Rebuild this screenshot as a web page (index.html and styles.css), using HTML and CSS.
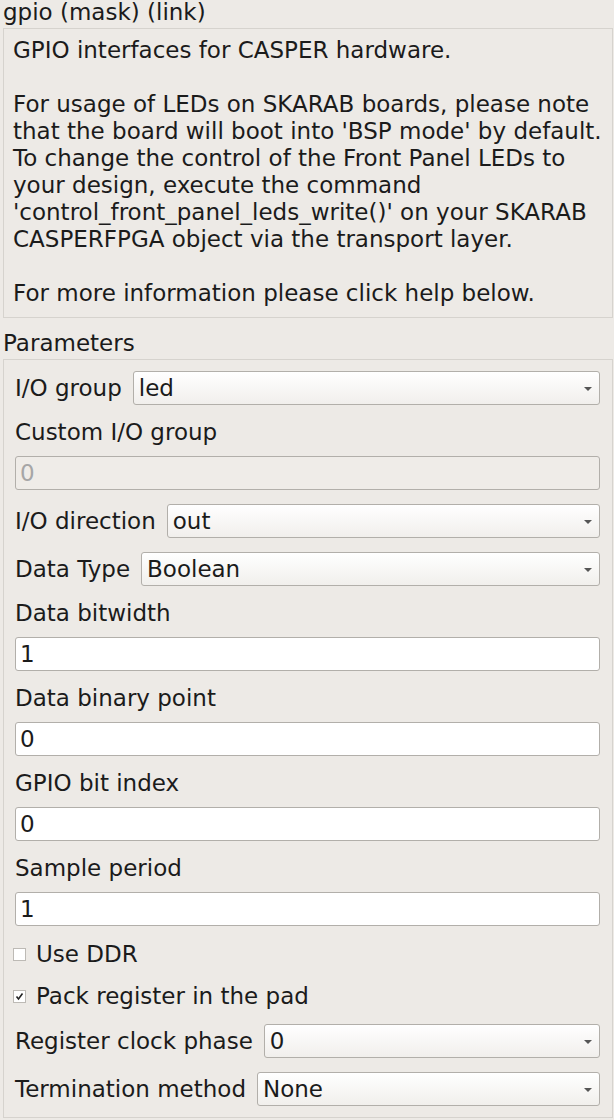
FILE: index.html
```html
<!DOCTYPE html>
<html>
<head>
<meta charset="utf-8">
<link rel="stylesheet" href="styles.css">
</head>
<body>
<div class="page">
  <div class="title">gpio (mask) (link)</div>
  <div class="desc">
    <div class="line">GPIO interfaces for CASPER hardware.</div>
    <div class="line">&nbsp;</div>
    <div class="line">For usage of LEDs on SKARAB boards, please note</div>
    <div class="line">that the board will boot into 'BSP mode' by default.</div>
    <div class="line">To change the control of the Front Panel LEDs to</div>
    <div class="line">your design, execute the command</div>
    <div class="line">'control_front_panel_leds_write()' on your SKARAB</div>
    <div class="line">CASPERFPGA object via the transport layer.</div>
    <div class="line">&nbsp;</div>
    <div class="line">For more information please click help below.</div>
  </div>
  <div class="section-label">Parameters</div>
  <div class="group">
    <div class="combo-row">
      <span class="lbl">I/O group</span>
      <div class="combo"><span>led</span><i class="arrow"></i></div>
    </div>
    <div class="lbl line">Custom I/O group</div>
    <div class="input disabled">0</div>
    <div class="combo-row">
      <span class="lbl">I/O direction</span>
      <div class="combo"><span>out</span><i class="arrow"></i></div>
    </div>
    <div class="combo-row">
      <span class="lbl">Data Type</span>
      <div class="combo"><span>Boolean</span><i class="arrow"></i></div>
    </div>
    <div class="lbl line">Data bitwidth</div>
    <div class="input">1</div>
    <div class="lbl line">Data binary point</div>
    <div class="input">0</div>
    <div class="lbl line">GPIO bit index</div>
    <div class="input">0</div>
    <div class="lbl line">Sample period</div>
    <div class="input">1</div>
    <div class="check-row">
      <span class="box"></span><span class="lbl">Use DDR</span>
    </div>
    <div class="check-row">
      <span class="box checked"><svg viewBox="0 0 13 13" width="13" height="13"><path d="M3.5 6.5 L5.5 9 L9.5 3.5" fill="none" stroke="#222" stroke-width="1.6"/></svg></span><span class="lbl">Pack register in the pad</span>
    </div>
    <div class="combo-row">
      <span class="lbl">Register clock phase</span>
      <div class="combo"><span>0</span><i class="arrow"></i></div>
    </div>
    <div class="combo-row">
      <span class="lbl">Termination method</span>
      <div class="combo"><span>None</span><i class="arrow"></i></div>
    </div>
  </div>
</div>
</body>
</html>
```

FILE: styles.css
```css
html, body {
  margin: 0;
  padding: 0;
  background: #edeae6;
}
body {
  font-family: "DejaVu Sans", "Liberation Sans", sans-serif;
  font-size: 23px;
  color: #1b1b1b;
}
.page {
  width: 614px;
  height: 1120px;
  overflow: hidden;
}
.title {
  line-height: 25px;
  height: 25px;
  padding-left: 3px;
  margin-bottom: 3px;
  white-space: nowrap;
}
.desc {
  margin-left: 3px;
  width: 590px;
  border: 1px solid #d6d3ce;
  padding: 8px 9px 10px 9px;
  white-space: nowrap;
  overflow: hidden;
}
.line {
  line-height: 27px;
  height: 27px;
}
.section-label {
  margin-top: 12px;
  padding-left: 3px;
  line-height: 27px;
  height: 27px;
}
.group {
  margin-top: 2px;
  margin-left: 3px;
  width: 585px;
  border: 1px solid #d6d3ce;
  padding: 11px 12px 11px 11px;
  display: flex;
  flex-direction: column;
}
.group > * + * {
  margin-top: 14px;
}
.group > .line + .input {
  margin-top: 10px;
}
.combo-row {
  display: flex;
  align-items: center;
  gap: 11px;
  height: 34px;
  white-space: nowrap;
}
.combo {
  flex: 1;
  height: 34px;
  box-sizing: border-box;
  border: 1px solid #b2afaa;
  border-radius: 3px;
  background: linear-gradient(#ffffff, #f1efec);
  display: flex;
  align-items: center;
  padding-left: 5px;
  position: relative;
}
.arrow {
  position: absolute;
  right: 7px;
  top: 15px;
  width: 0;
  height: 0;
  border-left: 4px solid transparent;
  border-right: 4px solid transparent;
  border-top: 4px solid #555;
}
.input {
  height: 34px;
  line-height: 32px;
  box-sizing: border-box;
  border: 1px solid #b2afaa;
  border-radius: 3px;
  background: #ffffff;
  padding-left: 4px;
}
.input.disabled {
  background: #efece8;
  color: #a6a6a6;
}
.check-row {
  display: flex;
  align-items: center;
  height: 28px;
  margin-left: -2px;
  white-space: nowrap;
}
.box {
  width: 13px;
  height: 13px;
  box-sizing: border-box;
  border: 1px solid #bdbab5;
  background: #ffffff;
  margin-right: 10px;
  position: relative;
}
.box svg {
  position: absolute;
  left: -1px;
  top: -1px;
}
```
